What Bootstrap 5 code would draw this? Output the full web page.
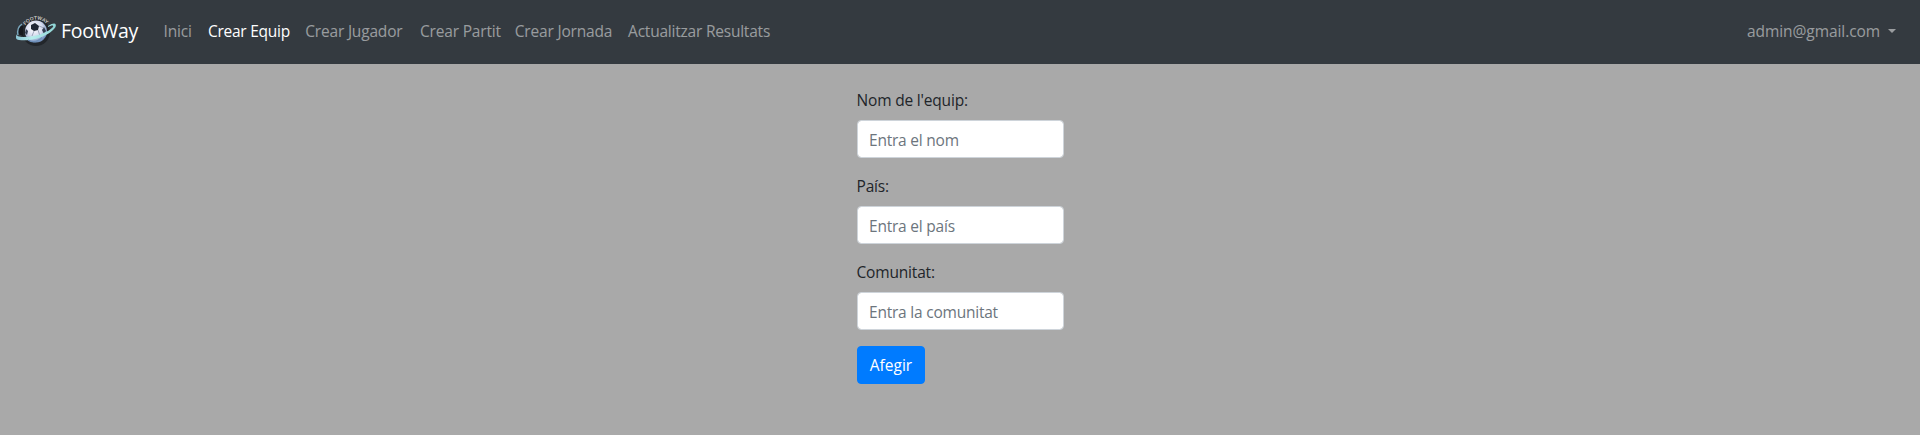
<!DOCTYPE html>
<html lang="ca">
<head>
<meta charset="utf-8">
<meta name="viewport" content="width=device-width, initial-scale=1">
<title>FootWay - Crear Equip</title>
<link href="https://cdn.jsdelivr.net/npm/bootstrap@5.3.0/dist/css/bootstrap.min.css" rel="stylesheet">
<style>
body { background: #a9a9a9; color: #212529; font-family: "Open Sans", "Noto Sans", sans-serif; font-size: 15.5px; line-height: 24px; letter-spacing: -.18px; }
.fw-bar { background: #343a40; height: 64px; padding: 0 16px; --bs-navbar-nav-link-padding-x: 8px; }
.fw-bar .navbar-brand { font-size: 19.5px; line-height: 30px; width: 123.5px; margin-right: 16px; padding: 0; color: #fff; letter-spacing: -.3px; white-space: nowrap; }
.fw-bar .brand-name { margin-left: 5px; padding-bottom: 3px; }
.fw-bar .nav-link { color: rgba(255,255,255,.5); white-space: nowrap; font-size: 15.5px; padding-top: 7px; padding-bottom: 9px; }
.fw-bar .nav-link.active { color: #fff; letter-spacing: -.26px; }
.w-inici { width: 44.5px; } .w-equip { width: 97.2px; } .w-jugador { width: 114.8px; }
.w-partit { width: 94.8px; } .w-jornada { width: 113.3px; } .w-result { width: 159px; letter-spacing: -.22px; }
.fw-bar .dropdown { letter-spacing: -.08px; }
.fw-bar .dropdown-toggle::after { margin-left: 8px; border-width: 4.8px; border-bottom: 0; }
.fw-form { width: 207px; margin: 24px 0 0 857px; }
.fw-form .form-label { margin: 0 0 8px -.5px; display: block; }
.fw-form .form-control { height: 38px; font-size: 15.5px; letter-spacing: -.22px; padding: 7px 11px 5px; border: 1px solid #ced4da; border-radius: 4px; }
.fw-form .form-control::placeholder { color: #6c757d; }
.fw-form .btn { background: #007bff; border-color: #007bff; color: #fff; border-radius: 4px; width: 68px; height: 38px; font-size: 15.5px; line-height: 24px; padding: 6px 0; }
</style>
</head>
<body>
<nav class="navbar navbar-expand fw-bar">
  <a class="navbar-brand d-flex align-items-center" href="#">
    <svg width="40" height="32" viewBox="0 0 40 32" overflow="visible" class="flex-shrink-0" aria-hidden="true">
      <defs>
        <radialGradient id="ball" cx=".4" cy=".35" r=".65"><stop offset="0" stop-color="#fff"/><stop offset=".6" stop-color="#d5daee"/><stop offset="1" stop-color="#718fbd"/></radialGradient>
        <linearGradient id="ring"><stop offset="0" stop-color="#8bc5d5"/><stop offset=".4" stop-color="#b8eeed"/><stop offset="1" stop-color="#8ed4d5"/></linearGradient>
      </defs>
      <circle cx="20" cy="16" r="14" fill="#22262b"/>
      <path d="M7 10C4 8 1 13 2 18L7 20Z" fill="#17191e"/>
      <path d="M6 8C3 10 1 14 2 19" fill="none" stroke="#79a5bb" stroke-width="1.5"/>
      <circle cx="20" cy="15.5" r="11" fill="url(#ball)"/>
      <path d="M15 9L19 7L23 10L22 14L18 15L15 13Z" fill="#202735"/>
      <path d="M10 13L12 15L11 19L9 17ZM28 11L30 15L28 18L26 14Z" fill="#333d50"/>
      <path d="M18 15L16 20M22 14L24 20M23 10L28 12" stroke="#8d98ad" stroke-width=".8"/>
      <path id="arc" d="M8.5 10.5Q20-3.5 33 10.5" fill="none"/>
      <text font-family="Liberation Sans, sans-serif" font-size="5" letter-spacing="0" font-weight="bold" fill="#c8c5c0"><textPath href="#arc" startOffset="1">FOOTWAY</textPath></text>
      <path d="M32 10C38 6 41 7 39.5 11C35 19 17 26 3 24C0 24-1 21 1 18C0 20 3 21 7 21C20 21 33 16 37 11C38 9 36 9 32 11Z" fill="url(#ring)"/>
      <path d="M12 24Q19 28.5 26 21.5" fill="none" stroke="#6d90ba" stroke-width="1.3"/>
    </svg>
    <span class="brand-name">FootWay</span>
  </a>
  <ul class="navbar-nav">
    <li class="nav-item w-inici"><a class="nav-link" href="#">Inici</a></li>
    <li class="nav-item w-equip"><a class="nav-link active" href="#">Crear Equip</a></li>
    <li class="nav-item w-jugador"><a class="nav-link" href="#">Crear Jugador</a></li>
    <li class="nav-item w-partit"><a class="nav-link" href="#">Crear Partit</a></li>
    <li class="nav-item w-jornada"><a class="nav-link" href="#">Crear Jornada</a></li>
    <li class="nav-item w-result"><a class="nav-link" href="#">Actualitzar Resultats</a></li>
  </ul>
  <ul class="navbar-nav ms-auto">
    <li class="nav-item dropdown"><a class="nav-link dropdown-toggle" href="#" data-bs-toggle="dropdown">admin@gmail.com</a></li>
  </ul>
</nav>
<form class="fw-form">
  <div class="mb-3"><label class="form-label" for="nom">Nom de l'equip:</label><input class="form-control" id="nom" placeholder="Entra el nom"></div>
  <div class="mb-3"><label class="form-label" for="pais">País:</label><input class="form-control" id="pais" placeholder="Entra el país"></div>
  <div class="mb-3"><label class="form-label" for="com">Comunitat:</label><input class="form-control" id="com" placeholder="Entra la comunitat"></div>
  <button class="btn" type="button">Afegir</button>
</form>
<script src="https://cdn.jsdelivr.net/npm/bootstrap@5.3.0/dist/js/bootstrap.bundle.min.js"></script>
</body>
</html>
